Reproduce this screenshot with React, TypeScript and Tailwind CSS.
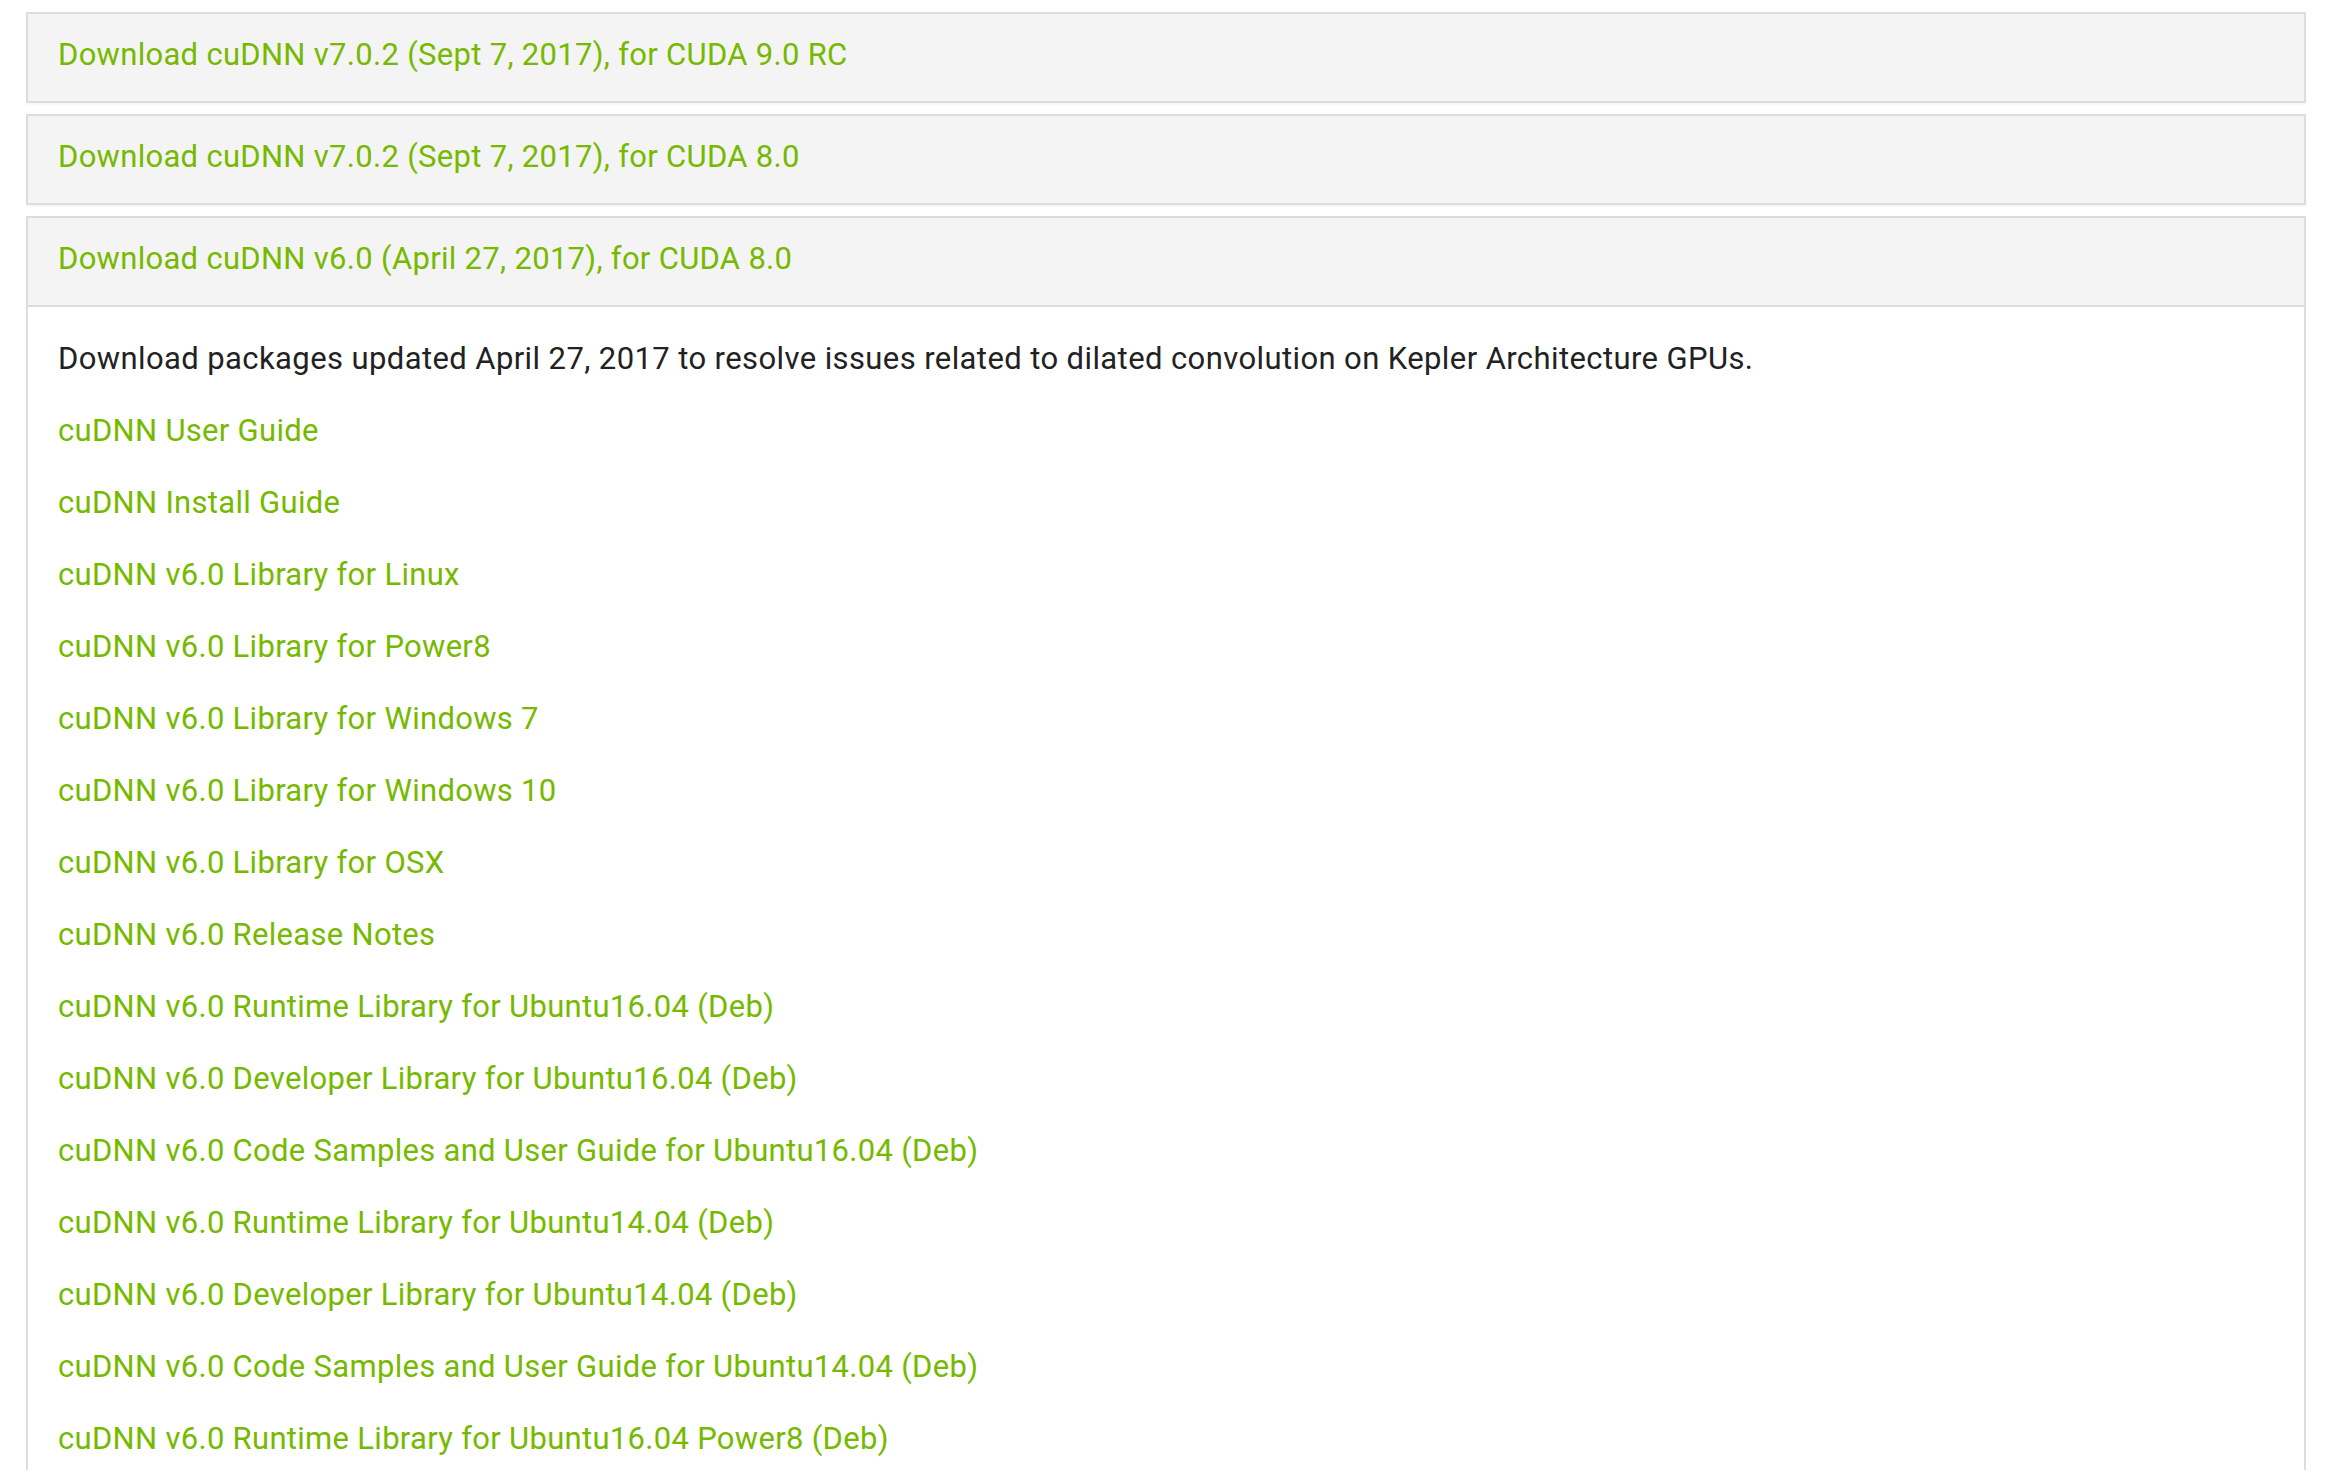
import React from "react";

const links = [
  "cuDNN User Guide",
  "cuDNN Install Guide",
  "cuDNN v6.0 Library for Linux",
  "cuDNN v6.0 Library for Power8",
  "cuDNN v6.0 Library for Windows 7",
  "cuDNN v6.0 Library for Windows 10",
  "cuDNN v6.0 Library for OSX",
  "cuDNN v6.0 Release Notes",
  "cuDNN v6.0 Runtime Library for Ubuntu16.04 (Deb)",
  "cuDNN v6.0 Developer Library for Ubuntu16.04 (Deb)",
  "cuDNN v6.0 Code Samples and User Guide for Ubuntu16.04 (Deb)",
  "cuDNN v6.0 Runtime Library for Ubuntu14.04 (Deb)",
  "cuDNN v6.0 Developer Library for Ubuntu14.04 (Deb)",
  "cuDNN v6.0 Code Samples and User Guide for Ubuntu14.04 (Deb)",
  "cuDNN v6.0 Runtime Library for Ubuntu16.04 Power8 (Deb)",
];

function Header({ title }: { title: string }) {
  return (
    <div className="border-2 border-[#dddddd] bg-[#f4f4f4] px-[30px] pt-[23px] pb-[28px] leading-[36px] shadow-[0_2px_2px_rgba(0,0,0,0.04)]">
      <a href="#" className="text-[#76b900] no-underline">
        {title}
      </a>
    </div>
  );
}

export default function App() {
  return (
    <div
      className="min-h-screen bg-white pl-[26px] pr-[24px] pt-[12px] text-[31px] tracking-[0.3px]"
      style={{ fontFamily: "Roboto, 'Noto Sans', sans-serif" }}
    >
      <div className="flex flex-col gap-[11px]">
        <Header title="Download cuDNN v7.0.2 (Sept 7, 2017), for CUDA 9.0 RC" />
        <Header title="Download cuDNN v7.0.2 (Sept 7, 2017), for CUDA 8.0" />
        <div>
          <Header title="Download cuDNN v6.0 (April 27, 2017), for CUDA 8.0" />
          <div className="border-x-2 border-b-2 border-[#dddddd] bg-white px-[30px] pt-[16px] pb-[20px]">
            <p className="h-[72px] leading-[72px] tracking-[0.4px] text-[#222222]">
              Download packages updated April 27, 2017 to resolve issues related to dilated convolution on Kepler Architecture GPUs.
            </p>
            {links.map((l) => (
              <div key={l} className="h-[72px] leading-[72px]">
                <a href="#" className="text-[#76b900]">
                  {l}
                </a>
              </div>
            ))}
          </div>
        </div>
      </div>
    </div>
  );
}
